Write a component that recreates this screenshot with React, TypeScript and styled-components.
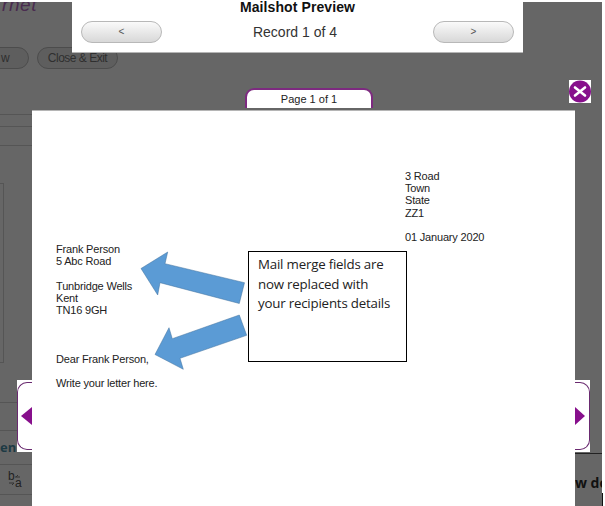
import React from "react";
import styled, { createGlobalStyle } from "styled-components";

const Global = createGlobalStyle`
  html, body { margin: 0; padding: 0; background: #fff; }
  #root { width: 605px; height: 506px; }
`;

const Page = styled.div`
  position: relative;
  box-sizing: border-box;
  display: flex;
  width: 605px;
  height: 506px;
  padding-top: 2px;
  overflow: hidden;
  background: #fff;
  font-family: "Liberation Sans", Arial, sans-serif;
`;

/* ---------- the dimmed page underneath ---------- */

const Backdrop = styled.div`
  display: flex;
  flex-direction: column;
  flex: 0 0 602px;
  height: 504px;
  overflow: hidden;
  background: #666666;
`;

const EdgeColumn = styled.div`
  display: flex;
  flex: 1;
  flex-direction: column;
  justify-content: flex-end;
`;

const EdgeMark = styled.div`
  width: 1px;
  height: 13px;
  background: #111;
`;

const Brand = styled.div`
  height: 12px;
  padding-left: 2px;
  font: italic 19px/6px "Liberation Sans", sans-serif;
  color: #4a2c50;
  letter-spacing: 0.6px;
`;

const ButtonRow = styled.div`
  display: flex;
  gap: 8px;
  margin-top: 33px;
`;

const GhostButton = styled.div`
  box-sizing: border-box;
  height: 22px;
  border: 1px solid #4c4c4c;
  border-radius: 11px;
  background: #5e5e5e;
  color: #2f2f2f;
  font-size: 12px;
  line-height: 20px;
  white-space: nowrap;
  letter-spacing: -0.5px;
`;

const PartButton = styled(GhostButton)`
  width: 50px;
  margin-left: -21px;
  padding-left: 21px;
`;

const ExitButton = styled(GhostButton)`
  width: 81px;
  text-align: center;
`;

const Rails = styled.div`
  display: flex;
  flex: 1;
  justify-content: space-between;
`;

const LeftRail = styled.div`
  display: flex;
  flex-direction: column;
  width: 32px;
`;

const Band = styled.div<{ $h: number }>`
  box-sizing: border-box;
  display: flex;
  align-items: center;
  height: ${(p) => p.$h}px;
  border-bottom: 1px solid #555;
`;

const SidePanel = styled.div`
  box-sizing: border-box;
  width: 4px;
  height: 180px;
  margin-top: 37px;
  border: 1px solid #555;
  border-left: none;
`;

const SectionLabel = styled.div`
  margin-top: -2px;
  font: bold 13px "Open Sans", sans-serif;
  color: #1d3a44;
`;

const SwapIcon = styled.div`
  display: grid;
  grid-template-columns: 7px 8px;
  grid-template-rows: 7px 8px;
  margin: 2px 0 0 8px;
  font-size: 12px;
  line-height: 7px;
  color: #222;
`;

const RightRail = styled.div`
  width: 27px;
  padding-top: 384px;
`;

const RightRule = styled.div`
  height: 1px;
  background: #222;
`;

const RightLabel = styled.div`
  margin-top: 20px;
  font: bold 14px/18px "Open Sans", sans-serif;
  color: #111;
  white-space: nowrap;
`;

/* ---------- the preview dialog on top ---------- */

const Overlay = styled.div`
  position: absolute;
  inset: 0;
  display: flex;
  flex-direction: column;
`;

const Toolbar = styled.div`
  flex: 0 0 auto;
  box-sizing: border-box;
  width: 451px;
  height: 53px;
  margin-left: 72px;
  background: #fff;
  border-bottom: 1px solid #b5b5b5;
  text-align: center;
`;

const Title = styled.div`
  margin-top: -1px;
  font-size: 14px;
  font-weight: bold;
  line-height: 16px;
  letter-spacing: 0.1px;
  color: #111;
`;

const RecordRow = styled.div`
  display: flex;
  align-items: center;
  justify-content: space-between;
  padding: 6px 9px 0;
`;

const Record = styled.div`
  margin-right: 5px;
  font-size: 14px;
  color: #333;
`;

const NavButton = styled.div`
  box-sizing: border-box;
  width: 81px;
  height: 22px;
  border: 1px solid #b8b8b8;
  border-radius: 11px;
  background: linear-gradient(#fafafa, #d8d8d8);
  color: #555;
  font-size: 10px;
  line-height: 20px;
  text-align: center;
`;

const TabBar = styled.div`
  flex: 0 0 57px;
  display: flex;
  justify-content: space-between;
  padding: 0 14px 0 245px;
`;

const Tab = styled.div`
  box-sizing: border-box;
  align-self: flex-end;
  width: 128px;
  height: 20px;
  margin-bottom: 2px;
  background: #fff;
  border: 2px solid #7d2a80;
  border-bottom: none;
  border-radius: 9px 9px 0 0;
  text-align: center;
  font-size: 11px;
  line-height: 19px;
  color: #222;
`;

const CloseBox = styled.div`
  width: 22px;
  height: 23px;
  margin-top: 27px;
  background: #fff;
`;

const SheetRow = styled.div`
  flex: 1;
  display: flex;
  padding-left: 17px;
`;

const Sheet = styled.div`
  position: relative;
  box-sizing: border-box;
  display: flex;
  flex-direction: column;
  width: 543px;
  padding: 59px 0 0 24px;
  background: #fff;
  border-top: 1px solid #b5b5b5;
`;

const Pager = styled.div`
  box-sizing: border-box;
  width: 15px;
  height: 72px;
  margin-top: 270px;
  padding: 2px 0;
  background: #fff;
`;

const PagerOutline = styled.div<{ $side: "left" | "right" }>`
  box-sizing: border-box;
  display: flex;
  align-items: center;
  height: 68px;
  border: 1.5px solid #6a2a70;
  ${(p) =>
    p.$side === "left"
      ? "justify-content: flex-end; border-right: none; border-radius: 10px 0 0 10px;"
      : "justify-content: flex-start; border-left: none; border-radius: 0 10px 10px 0;"}
`;

const PagerArrow = styled.div<{ $side: "left" | "right" }>`
  width: 0;
  height: 0;
  border-top: 9px solid transparent;
  border-bottom: 9px solid transparent;
  ${(p) =>
    p.$side === "left"
      ? "border-right: 11px solid #870f8c;"
      : "border-left: 10px solid #870f8c;"}
`;

const LetterText = styled.div`
  font-size: 11px;
  line-height: 12.2px;
  color: #222;
  white-space: pre;
  letter-spacing: -0.18px;
`;

const SenderBlock = styled(LetterText)`
  margin-left: 349px;
`;

const Note = styled.div`
  position: absolute;
  left: 216px;
  top: 140px;
  box-sizing: border-box;
  width: 159px;
  height: 111px;
  border: 1px solid #000;
  background: #fff;
  padding: 3px 9px;
  font: 13.3px/19.5px "Open Sans", "Liberation Sans", sans-serif;
  color: #222;
  letter-spacing: -0.2px;
`;

const ArrowLayer = styled.svg`
  position: absolute;
  left: -32px;
  top: -110px;
  pointer-events: none;
`;

export default function App() {
  return (
    <Page>
      <Global />
      <Backdrop>
        <Brand>rnet</Brand>
        <ButtonRow>
          <PartButton>w</PartButton>
          <ExitButton>Close &amp; Exit</ExitButton>
        </ButtonRow>
        <Rails>
          <LeftRail>
            <Band $h={46} />
            <Band $h={12} />
            <Band $h={19} />
            <SidePanel />
            <Band $h={40} />
            <Band $h={28} />
            <Band $h={34}>
              <SectionLabel>en</SectionLabel>
            </Band>
            <Band $h={30}>
              <SwapIcon>
                <span>b</span>
                <svg width="7" height="7" viewBox="0 0 7 7">
                  <path d="M0 4 H5 M3 2 L1 4" stroke="#333" strokeWidth="1" fill="none" />
                </svg>
                <svg width="7" height="7" viewBox="0 0 7 7">
                  <path d="M1 3 H6 M4 5 L6 3" stroke="#333" strokeWidth="1" fill="none" />
                </svg>
                <span>a</span>
              </SwapIcon>
            </Band>
          </LeftRail>
          <RightRail>
            <RightRule />
            <RightLabel>w do</RightLabel>
          </RightRail>
        </Rails>
      </Backdrop>
      <EdgeColumn>
        <EdgeMark />
      </EdgeColumn>
      <Overlay>
        <Toolbar>
          <Title>Mailshot Preview</Title>
          <RecordRow>
            <NavButton>&lt;</NavButton>
            <Record>Record 1 of 4</Record>
            <NavButton>&gt;</NavButton>
          </RecordRow>
        </Toolbar>
        <TabBar>
          <Tab>Page 1 of 1</Tab>
          <CloseBox>
            <svg width="22" height="23" viewBox="0 0 22 23">
              <circle cx="11" cy="11.5" r="11" fill="#870f8c" />
              <path d="M6 7.5 L16 15.5 M16 7.5 L6 15.5" stroke="#fff" strokeWidth="2.6" strokeLinecap="round" />
            </svg>
          </CloseBox>
        </TabBar>
        <SheetRow>
          <Pager>
            <PagerOutline $side="left">
              <PagerArrow $side="left" />
            </PagerOutline>
          </Pager>
          <Sheet>
            <SenderBlock>{"3 Road\nTown\nState\nZZ1\n\n01 January 2020"}</SenderBlock>
            <LetterText>{"Frank Person\n5 Abc Road\n\nTunbridge Wells\nKent\nTN16 9GH\n\n\n\nDear Frank Person,\n\nWrite your letter here."}</LetterText>
            <Note>Mail merge fields are now replaced with your recipients details</Note>
            <ArrowLayer width="605" height="506" viewBox="0 0 605 506">
              <path d="M141 267.5 L167.7 251 L165 262.7 L244.5 281.7 L239.3 302.5 L160 281.7 L157.7 294 Z" fill="#5b9bd5" stroke="#41719c" strokeWidth="0.5" />
              <path d="M155 353.5 L169 326.7 L172.3 337.7 L239.3 314 L246.7 334.3 L180 357.3 L183.3 368.3 Z" fill="#5b9bd5" stroke="#41719c" strokeWidth="0.5" />
            </ArrowLayer>
          </Sheet>
          <Pager>
            <PagerOutline $side="right">
              <PagerArrow $side="right" />
            </PagerOutline>
          </Pager>
        </SheetRow>
      </Overlay>
    </Page>
  );
}
